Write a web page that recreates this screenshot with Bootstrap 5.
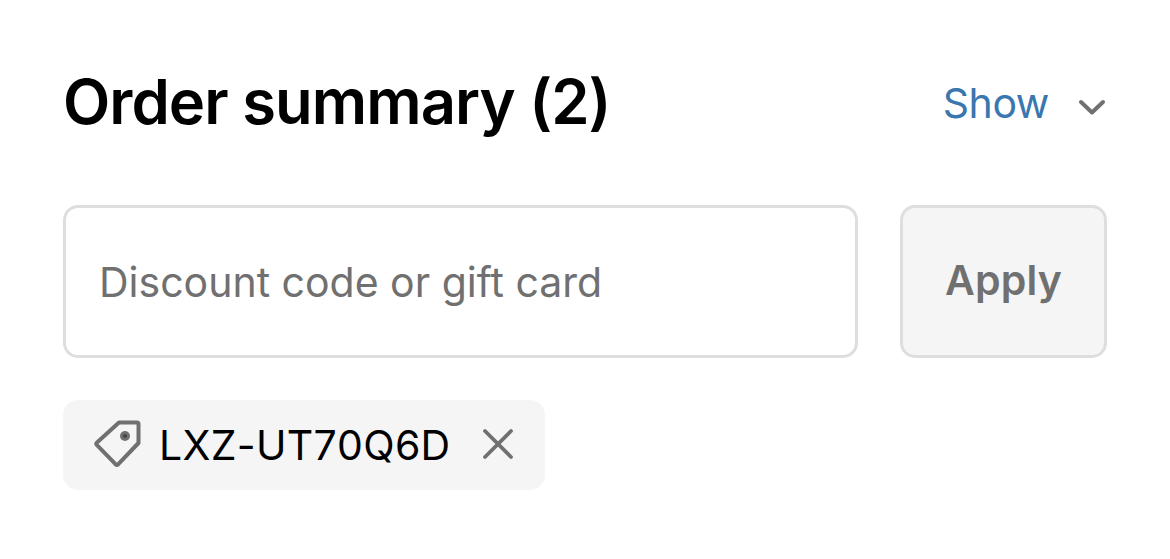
<!DOCTYPE html>
<html lang="en">
<head>
<meta charset="utf-8">
<meta name="viewport" content="width=device-width, initial-scale=1">
<title>Order summary</title>
<link href="https://cdn.jsdelivr.net/npm/bootstrap@5.3.0/dist/css/bootstrap.min.css" rel="stylesheet">
<style>
  body { font-family: Inter, "Liberation Sans", sans-serif; color: #000; background: #fff; }
  .summary { padding: 71px 63px 0; }
  .summary-head { height: 64px; margin-bottom: 70px; }
  .summary-title { font-size: 61.5px; font-weight: 600; line-height: 62px; letter-spacing: -.95px; padding-bottom: 2px; }
  .toggle-link { font-size: 41px; line-height: 64px; letter-spacing: -.4px; color: #3a76b0; }
  .toggle-icon { margin: 7px 1px 0 29px; }
  .code-form { gap: 42px; margin-bottom: 42px; }
  .code-input, .code-input:focus { height: 153px; border: 3px solid #dedede; border-radius: 15px; padding: 1px 33px 0; font-size: 41px; color: #000; box-shadow: none; }
  .code-input::placeholder { color: #707070; opacity: 1; }
  .apply-btn, .apply-btn:hover { width: 207px; height: 153px; border: 3px solid #dedede; border-radius: 15px; background: #f5f5f5; color: #707070; font-size: 41px; font-weight: 600; letter-spacing: .2px; padding: 0 0 1px; }
  .code-tag { height: 90px; width: 482px; border-radius: 15px; background: #f5f5f5; padding: 0 31px 0 30px; }
  .tag-icon { margin-bottom: 3px; }
  .code-text { font-size: 41px; line-height: 90px; font-kerning: none; letter-spacing: .3px; margin-left: 18px; }
  .code-remove { margin-bottom: 2px; }
</style>
</head>
<body>
<main class="summary">
  <div class="summary-head d-flex justify-content-between align-items-center">
    <h1 class="summary-title mb-0">Order summary (2)</h1>
    <a href="#" class="toggle-link d-flex align-items-center text-decoration-none"><span>Show</span>
      <svg class="toggle-icon" width="28" height="18" viewBox="0 0 28 18" fill="none" stroke="#707070" stroke-width="4" stroke-linecap="round" stroke-linejoin="round"><path d="M3 4l11 10.500L25 4"/></svg>
    </a>
  </div>
  <form class="code-form d-flex">
    <input type="text" class="code-input form-control" placeholder="Discount code or gift card" aria-label="Discount code or gift card">
    <button type="button" class="apply-btn btn flex-shrink-0">Apply</button>
  </form>
  <div class="code-tag d-flex align-items-center">
    <svg class="tag-icon flex-shrink-0" width="48" height="48" viewBox="0 0 48 48" fill="none" stroke="#707070" stroke-width="4" stroke-linejoin="round"><path d="M26 2.500H44a1.500 1.500 0 0 1 1.500 1.500V23L25.300 44.200a2 2 0 0 1-2.800 0L4 25.200a2 2 0 0 1 0-2.800z"/><circle cx="32" cy="16" r="5" fill="#707070" stroke="none"/><circle cx="32" cy="16" r="2" fill="#454545" stroke="none"/></svg>
    <span class="code-text">LXZ-UT70Q6D</span>
    <button type="button" class="code-remove btn p-0 border-0 ms-auto d-flex" aria-label="Remove"><svg width="32" height="32" viewBox="0 0 32 32" stroke="#707070" stroke-width="3.800" stroke-linecap="round"><path d="M3 3l26 26M29 3L3 29"/></svg></button>
  </div>
</main>
<script src="https://cdn.jsdelivr.net/npm/bootstrap@5.3.0/dist/js/bootstrap.bundle.min.js"></script>
</body>
</html>
